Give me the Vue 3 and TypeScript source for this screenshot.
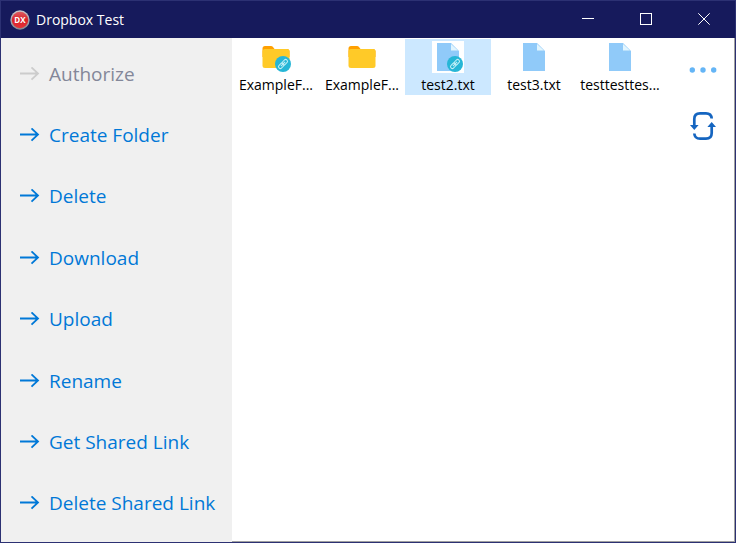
<script setup lang="ts">
import { ref } from 'vue'

interface Action {
  label: string
  disabled?: boolean
}

interface Entry {
  id: number
  name: string
  kind: 'folder' | 'file'
  shared: boolean
}

const actions: Action[] = [
  { label: 'Authorize', disabled: true },
  { label: 'Create Folder' },
  { label: 'Delete' },
  { label: 'Download' },
  { label: 'Upload' },
  { label: 'Rename' },
  { label: 'Get Shared Link' },
  { label: 'Delete Shared Link' },
]

const entries: Entry[] = [
  { id: 1, name: 'ExampleF...', kind: 'folder', shared: true },
  { id: 2, name: 'ExampleF...', kind: 'folder', shared: false },
  { id: 3, name: 'test2.txt', kind: 'file', shared: true },
  { id: 4, name: 'test3.txt', kind: 'file', shared: false },
  { id: 5, name: 'testtesttes...', kind: 'file', shared: false },
]

const selectedId = ref(3)
</script>

<template>
  <div class="window">
    <header class="titlebar">
      <svg class="logo" viewBox="0 0 20 20" aria-hidden="true">
        <defs>
          <linearGradient id="rim" x1="0" y1="0" x2="0" y2="1">
            <stop offset="0" stop-color="#c9c6c8" />
            <stop offset="1" stop-color="#85888f" />
          </linearGradient>
          <linearGradient id="disc" x1="0" y1="0" x2="0" y2="1">
            <stop offset="0" stop-color="#dc5a60" />
            <stop offset="0.5" stop-color="#db2228" />
            <stop offset="1" stop-color="#e5343a" />
          </linearGradient>
        </defs>
        <circle cx="10" cy="10" r="9.7" fill="url(#rim)" />
        <circle cx="10" cy="10" r="8.2" fill="url(#disc)" />
        <text x="10" y="13" text-anchor="middle" class="logo-text">DX</text>
      </svg>
      <h1 class="title">Dropbox Test</h1>
      <div class="controls">
        <button type="button" class="control" aria-label="Minimize">
          <svg viewBox="0 0 12 12" shape-rendering="crispEdges"><path d="M0 5.5H12" /></svg>
        </button>
        <button type="button" class="control" aria-label="Maximize">
          <svg viewBox="0 0 12 12" shape-rendering="crispEdges"><path d="M.5 .5H11.5V11.5H.5Z" /></svg>
        </button>
        <button type="button" class="control" aria-label="Close">
          <svg viewBox="0 0 12 12"><path d="M.3 .3L11.7 11.7M11.7 .3L.3 11.7" /></svg>
        </button>
      </div>
    </header>

    <div class="body">
      <nav class="sidebar">
        <button
          v-for="action in actions"
          :key="action.label"
          type="button"
          class="action"
          :disabled="action.disabled"
        >
          <svg class="arrow" viewBox="0 0 20 14" aria-hidden="true">
            <path d="M0 6.500H18M11.500 .4L18 6.500L11.500 12.600" />
          </svg>
          <span>{{ action.label }}</span>
        </button>
      </nav>

      <main class="content">
        <div class="files">
          <button
            v-for="entry in entries"
            :key="entry.id"
            type="button"
            class="file"
            :class="{ selected: entry.id === selectedId }"
            @click="selectedId = entry.id"
          >
            <svg class="file-icon" viewBox="0 0 32 32" aria-hidden="true">
              <template v-if="entry.kind === 'folder'">
                <path d="M2.500 7.500Q2.500 5 5 5H11Q12.300 5 13 6L14.500 8H27Q29.500 8 29.500 10.500V16H2.500Z" fill="#ffa000" />
                <path d="M5 8H27Q29.500 8 29.500 10.500V24.500Q29.500 27 27 27H5Q2.500 27 2.500 24.500V10.500Q2.500 8 5 8Z" fill="#ffca28" />
              </template>
              <template v-else>
                <path d="M5 2H19L27 10V30H5Z" fill="#90caf9" />
                <path d="M19 3V9.500H26Z" fill="#e1f5fe" />
              </template>
              <g v-if="entry.shared">
                <circle cx="23" cy="23" r="8" fill="#26b6d6" />
                <g transform="translate(23 23) rotate(-45)" fill="none" stroke="#c3eff7" stroke-width="1">
                  <rect x="-5.500" y="-1.800" width="6" height="3.600" rx="1.500" />
                  <rect x="-0.500" y="-1.800" width="6" height="3.600" rx="1.500" />
                  <path d="M-3 0H3" />
                </g>
              </g>
            </svg>
            <span class="file-name">{{ entry.name }}</span>
          </button>
        </div>

        <div class="tools">
          <button type="button" class="tool" aria-label="More">
            <svg viewBox="0 0 32 32" fill="#64b5f6">
              <circle cx="5.300" cy="16" r="2.700" />
              <circle cx="16" cy="16" r="2.700" />
              <circle cx="26.700" cy="16" r="2.700" />
            </svg>
          </button>
          <button type="button" class="tool" aria-label="Refresh">
            <svg viewBox="0 0 32 32">
              <g fill="none" stroke="#1565c0" stroke-width="2.700">
                <path d="M7.300 16V9Q7.300 3.300 13 3.300H19Q24.300 3.300 24.700 8.500" />
                <path d="M24.700 16V23Q24.700 28.700 19 28.700H13Q7.700 28.700 7.300 23.500" />
              </g>
              <path d="M3 15H11.600L7.300 20ZM20.400 17H29L24.700 12Z" fill="#1565c0" />
            </svg>
          </button>
        </div>
      </main>
    </div>
  </div>
</template>

<style>
body {
  margin: 0;
}
</style>

<style scoped>
.window {
  box-sizing: border-box;
  display: flex;
  flex-direction: column;
  min-height: 100vh;
  border: 1px solid #2c3173;
  background: #fff;
  font-family: "Open Sans", "Noto Sans", sans-serif;
}

button {
  margin: 0;
  padding: 0;
  border: 0;
  background: none;
  font: inherit;
  color: inherit;
}

.titlebar {
  display: flex;
  align-items: center;
  height: 37px;
  padding: 0 2px 0 9px;
  gap: 6px;
  background: #161a5c;
  color: #fff;
}

.logo {
  width: 20px;
  height: 20px;
}

.logo-text {
  font-family: "Open Sans", sans-serif;
  font-size: 8px;
  font-weight: 700;
  fill: #fff;
}

.title {
  flex: 1;
  margin: 0;
  font-size: 14px;
  font-weight: 400;
  line-height: 20px;
}

.controls {
  display: flex;
  align-self: stretch;
}

.control {
  display: flex;
  align-items: flex-start;
  justify-content: center;
  width: 58px;
  padding-top: 12px;
}

.control svg {
  width: 12px;
  height: 12px;
  fill: none;
  stroke: #fff;
  stroke-width: 1;
}

.body {
  flex: 1;
  display: flex;
}

.sidebar {
  box-sizing: border-box;
  display: flex;
  flex-direction: column;
  flex: 0 0 231px;
  padding: 5px 0 8px;
  background: #f0f0f0;
}

.action {
  flex: 1;
  display: flex;
  align-items: center;
  gap: 9px;
  min-height: 40px;
  padding-left: 19px;
  color: #0078d7;
  font-size: 19px;
  line-height: 26px;
  text-align: left;
}

.action:disabled {
  color: #838799;
}

.arrow {
  width: 20px;
  height: 14px;
  fill: none;
  stroke: #0078d7;
  stroke-width: 1.8;
}

.action:disabled .arrow {
  stroke: #cccccc;
}

.content {
  flex: 1;
  display: flex;
  border: solid #a0a0a0;
  border-width: 0 1px 1px 0;
}

.files {
  flex: 1;
  display: flex;
  flex-wrap: wrap;
  align-content: flex-start;
  padding: 1px 0 0 1px;
}

.file {
  box-sizing: border-box;
  display: flex;
  flex-direction: column;
  align-items: center;
  width: 86px;
  height: 56px;
  padding-top: 2px;
  color: #000;
}

.file.selected {
  background: #cce8ff;
}

.file-icon {
  width: 32px;
  height: 32px;
  background: #fff;
}

.file-name {
  margin-top: 2px;
  font-size: 14px;
  line-height: 20px;
  white-space: nowrap;
}

.tools {
  display: flex;
  flex-direction: column;
  gap: 24px;
  padding: 16px 15px 0 0;
}

.tool {
  width: 32px;
  height: 32px;
}

.tool svg {
  display: block;
  width: 32px;
  height: 32px;
}
</style>
